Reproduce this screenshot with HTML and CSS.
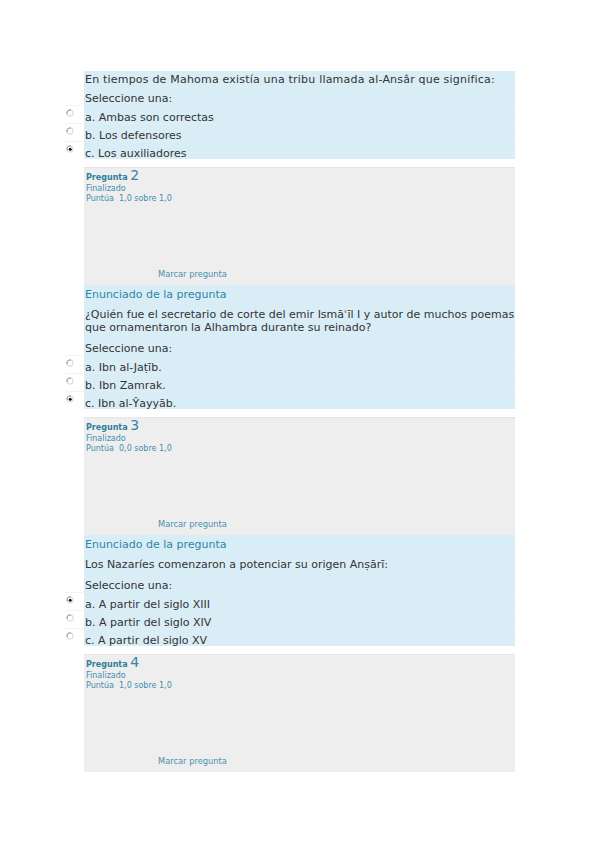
FILE: index.html
```html
<!DOCTYPE html>
<html lang="es">
<head>
<meta charset="utf-8">
<title>Cuestionario</title>
<link rel="stylesheet" href="styles.css">
</head>
<body>
<div class="page">

  <div class="content first">
    <p class="qtext wide">En tiempos de Mahoma existía una tribu llamada al-Ansâr que significa:</p>
    <p class="prompt">Seleccione una:</p>
    <div class="answers">
      <div class="opt"><span class="rcell"><svg class="radio" viewBox="0 0 8 8"><circle cx="4" cy="4" r="3.2" fill="#fff" stroke="#c8c8c8" stroke-width="0.8"/><path d="M1.2 5 A3 3 0 0 1 5 1.1" fill="none" stroke="#8a8a8a" stroke-width="0.9"/></svg></span><span class="label">a. Ambas son correctas</span></div>
      <div class="opt"><span class="rcell"><svg class="radio" viewBox="0 0 8 8"><circle cx="4" cy="4" r="3.2" fill="#fff" stroke="#c8c8c8" stroke-width="0.8"/><path d="M1.2 5 A3 3 0 0 1 5 1.1" fill="none" stroke="#8a8a8a" stroke-width="0.9"/></svg></span><span class="label">b. Los defensores</span></div>
      <div class="opt"><span class="rcell"><svg class="radio" viewBox="0 0 8 8"><circle cx="4" cy="4" r="3.2" fill="#fff" stroke="#c8c8c8" stroke-width="0.8"/><path d="M1.2 5 A3 3 0 0 1 5 1.1" fill="none" stroke="#8a8a8a" stroke-width="0.9"/><circle cx="4.2" cy="4.2" r="1.5" fill="#111"/></svg></span><span class="label">c. Los auxiliadores</span></div>
    </div>
  </div>

  <div class="question">
    <div class="info">
      <div class="qno">Pregunta <span class="num">2</span></div>
      <div class="state">Finalizado</div>
      <div class="grade">Puntúa&nbsp; 1,0 sobre 1,0</div>
      <div class="flag">Marcar pregunta</div>
    </div>
    <div class="content">
      <h3 class="qtitle">Enunciado de la pregunta</h3>
      <p class="qtext">¿Quién fue el secretario de corte del emir Ismāʿīl I y autor de muchos poemas que ornamentaron la Alhambra durante su reinado?</p>
      <p class="prompt">Seleccione una:</p>
      <div class="answers">
        <div class="opt"><span class="rcell"><svg class="radio" viewBox="0 0 8 8"><circle cx="4" cy="4" r="3.2" fill="#fff" stroke="#c8c8c8" stroke-width="0.8"/><path d="M1.2 5 A3 3 0 0 1 5 1.1" fill="none" stroke="#8a8a8a" stroke-width="0.9"/></svg></span><span class="label">a. Ibn al-Jaṭīb.</span></div>
        <div class="opt"><span class="rcell"><svg class="radio" viewBox="0 0 8 8"><circle cx="4" cy="4" r="3.2" fill="#fff" stroke="#c8c8c8" stroke-width="0.8"/><path d="M1.2 5 A3 3 0 0 1 5 1.1" fill="none" stroke="#8a8a8a" stroke-width="0.9"/></svg></span><span class="label">b. Ibn Zamrak.</span></div>
        <div class="opt"><span class="rcell"><svg class="radio" viewBox="0 0 8 8"><circle cx="4" cy="4" r="3.2" fill="#fff" stroke="#c8c8c8" stroke-width="0.8"/><path d="M1.2 5 A3 3 0 0 1 5 1.1" fill="none" stroke="#8a8a8a" stroke-width="0.9"/><circle cx="4.2" cy="4.2" r="1.5" fill="#111"/></svg></span><span class="label">c. Ibn al-Ŷayyāb.</span></div>
      </div>
    </div>
  </div>

  <div class="question">
    <div class="info">
      <div class="qno">Pregunta <span class="num">3</span></div>
      <div class="state">Finalizado</div>
      <div class="grade">Puntúa&nbsp; 0,0 sobre 1,0</div>
      <div class="flag">Marcar pregunta</div>
    </div>
    <div class="content">
      <h3 class="qtitle">Enunciado de la pregunta</h3>
      <p class="qtext">Los Nazaríes comenzaron a potenciar su origen Anṣārī:</p>
      <p class="prompt">Seleccione una:</p>
      <div class="answers">
        <div class="opt"><span class="rcell"><svg class="radio" viewBox="0 0 8 8"><circle cx="4" cy="4" r="3.2" fill="#fff" stroke="#c8c8c8" stroke-width="0.8"/><path d="M1.2 5 A3 3 0 0 1 5 1.1" fill="none" stroke="#8a8a8a" stroke-width="0.9"/><circle cx="4.2" cy="4.2" r="1.5" fill="#111"/></svg></span><span class="label">a. A partir del siglo XIII</span></div>
        <div class="opt"><span class="rcell"><svg class="radio" viewBox="0 0 8 8"><circle cx="4" cy="4" r="3.2" fill="#fff" stroke="#c8c8c8" stroke-width="0.8"/><path d="M1.2 5 A3 3 0 0 1 5 1.1" fill="none" stroke="#8a8a8a" stroke-width="0.9"/></svg></span><span class="label">b. A partir del siglo XIV</span></div>
        <div class="opt"><span class="rcell"><svg class="radio" viewBox="0 0 8 8"><circle cx="4" cy="4" r="3.2" fill="#fff" stroke="#c8c8c8" stroke-width="0.8"/><path d="M1.2 5 A3 3 0 0 1 5 1.1" fill="none" stroke="#8a8a8a" stroke-width="0.9"/></svg></span><span class="label">c. A partir del siglo XV</span></div>
      </div>
    </div>
  </div>

  <div class="question">
    <div class="info">
      <div class="qno">Pregunta <span class="num">4</span></div>
      <div class="state">Finalizado</div>
      <div class="grade">Puntúa&nbsp; 1,0 sobre 1,0</div>
      <div class="flag">Marcar pregunta</div>
    </div>
  </div>

</div>
</body>
</html>
```

FILE: styles.css
```css
html, body {
  margin: 0;
  padding: 0;
  background: #ffffff;
}

.page {
  width: 431px;
  margin-left: 84px;
  padding-top: 71px;
  font-family: "DejaVu Sans", Verdana, sans-serif;
  font-size: 11px;
  color: #333333;
}

.question {
  margin-top: 8px;
}

.info {
  height: 118px;
  box-sizing: border-box;
  background: #eeeeee;
  border-top: 1px dotted #dddddd;
  padding: 0 0 6px 2px;
  display: flex;
  flex-direction: column;
  color: #3f8eae;
  font-size: 8px;
  line-height: 10px;
}

.qno {
  font-size: 8px;
  font-weight: bold;
  color: #2f7f9c;
  line-height: 14px;
  height: 14px;
}

.qno .num {
  font-size: 14px;
  font-weight: normal;
  color: #3585a4;
}

.state {
  margin-top: 2px;
}

.flag {
  margin-top: auto;
  margin-left: 72px;
  font-size: 8.3px;
  color: #4a91ae;
}

.content {
  background: #d9edf6;
  padding-top: 2px;
}

.qtitle {
  margin: 0 0 5px 1px;
  font-size: 11px;
  font-weight: normal;
  line-height: 16px;
  color: #2f86a6;
}

.qtext {
  margin: 0 0 8px 1px;
  line-height: 13px;
}

.qtext.wide {
  letter-spacing: 0.2px;
}

.first .qtext {
  margin-bottom: 6px;
}

.prompt {
  margin: 0 0 0 1px;
  line-height: 13px;
}

.answers {
  margin-left: -19px;
}

.opt {
  display: flex;
  height: 18px;
}

.rcell {
  width: 19px;
  background: #ffffff;
  border-top: 1px solid #eef4f7;
  box-sizing: border-box;
  padding: 3px 0 0 1px;
}

.radio {
  display: block;
  width: 8px;
  height: 8px;
}

.label {
  flex: 1;
  box-sizing: border-box;
  padding: 5px 0 0 1px;
  line-height: 13px;
  border-top: 1px dotted #e6f1f6;
}
```
